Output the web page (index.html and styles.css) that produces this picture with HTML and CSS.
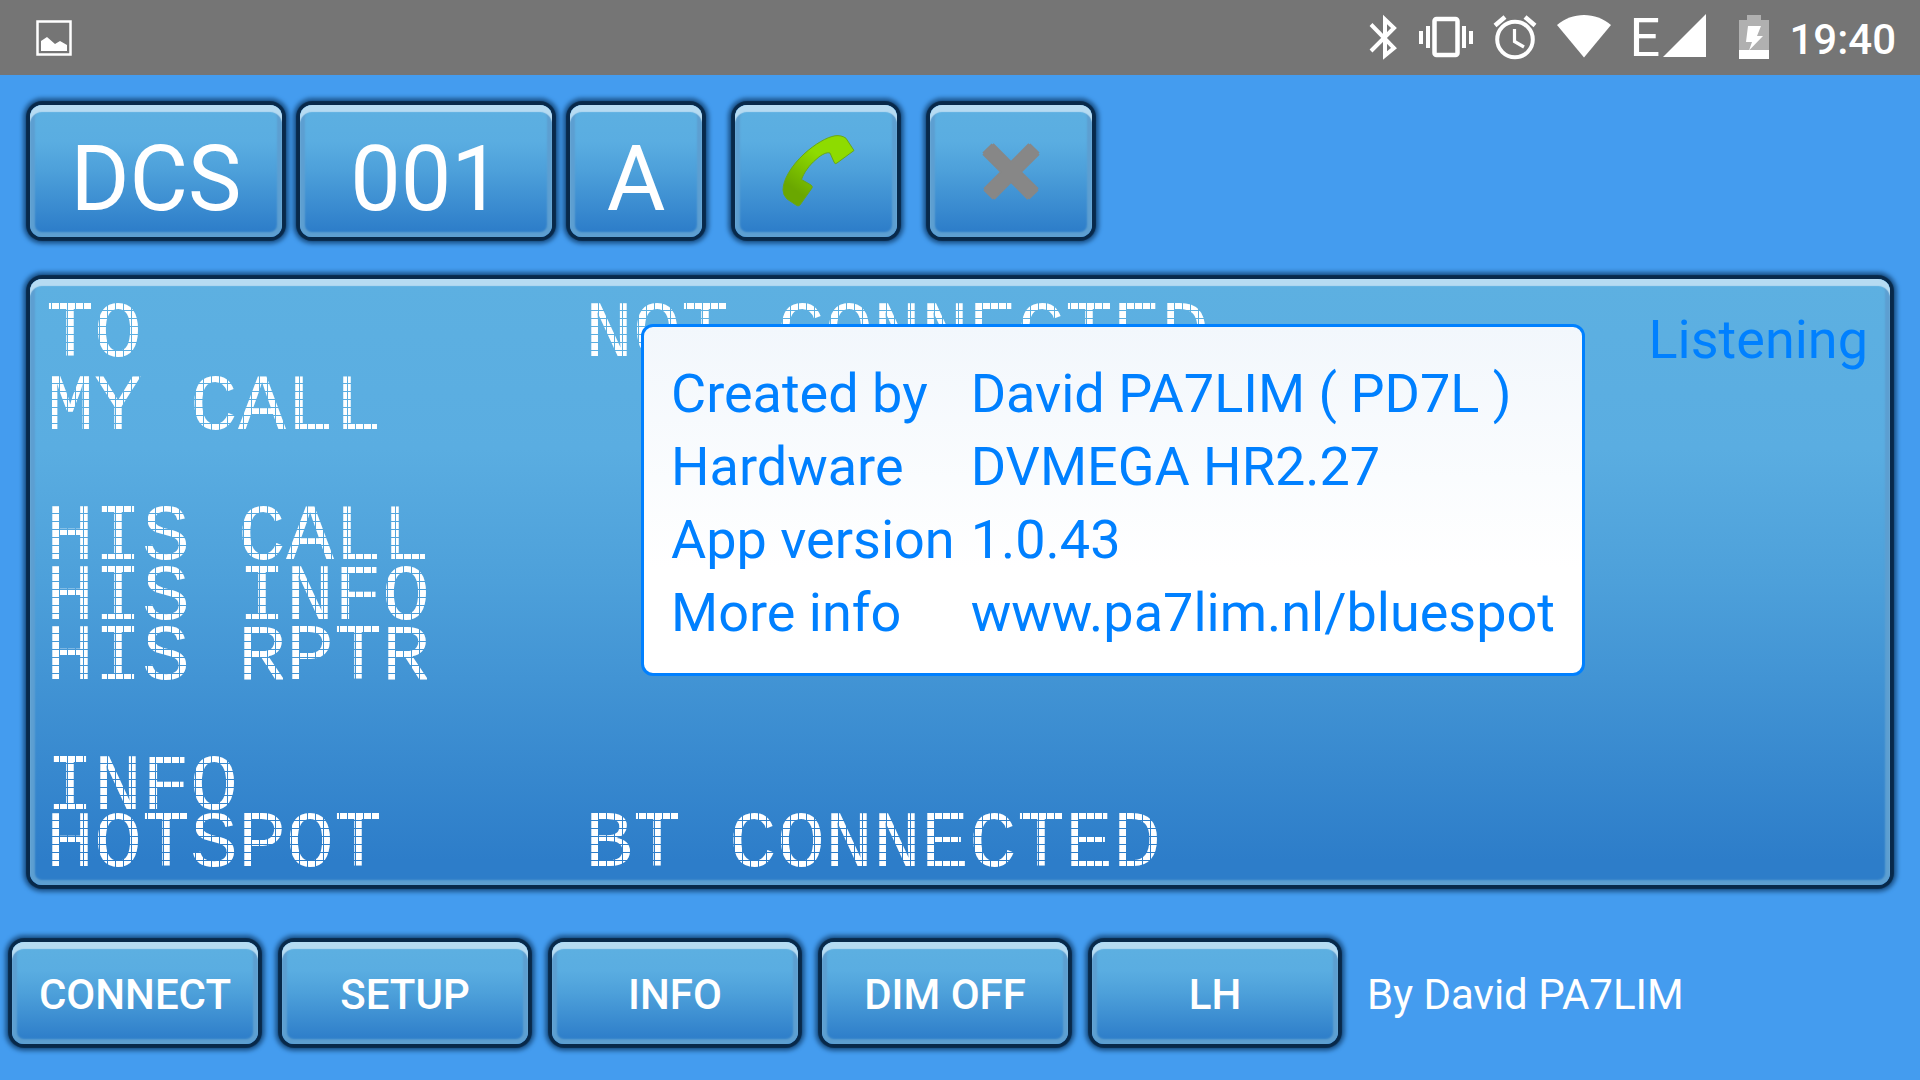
FILE: index.html
```html
<!DOCTYPE html>
<html lang="en">
<head>
<meta charset="utf-8">
<title>BlueSpot</title>
<link rel="stylesheet" href="styles.css">
</head>
<body>
<header class="status">
  <svg class="status-icon" width="36" height="47" viewBox="0 0 36 47" role="img" aria-label="Picture saved">
    <rect x="1.5" y="7.5" width="33" height="33" fill="none" stroke="#fff" stroke-width="2.5"/>
    <path d="M5 37V27l6-4 8 7 5-3 7 4v6z" fill="#fff"/>
  </svg>
  <div class="tray">
    <svg class="status-icon bluetooth" width="28" height="47" viewBox="0 0 28 47" role="img" aria-label="Bluetooth">
      <path d="M2 10.500 25 34l-9 7.500V5.500L25 14 2 37" fill="none" stroke="#fff" stroke-width="4" stroke-miterlimit="3"/>
    </svg>
    <svg class="status-icon vibrate" width="54" height="47" viewBox="0 0 54 47" role="img" aria-label="Vibrate">
      <rect x="15.500" y="5" width="23" height="36" rx="2" fill="none" stroke="#fff" stroke-width="4.500"/>
      <path d="M7 12h4v22H7zM0 17h4v13H0zM43 12h4v22h-4zM50 17h4v13h-4z" fill="#fff"/>
    </svg>
    <svg class="status-icon alarm" width="44" height="47" viewBox="0 0 44 47" role="img" aria-label="Alarm set">
      <circle cx="22" cy="25.500" r="17.800" fill="none" stroke="#fff" stroke-width="4"/>
      <path d="M2 11.500 12 3M32 3l10 8.500" stroke="#fff" stroke-width="4.500"/>
      <path d="M21.500 15v12.500l9.500 5.500" fill="none" stroke="#fff" stroke-width="3.200"/>
    </svg>
    <svg class="status-icon wifi" width="54" height="47" viewBox="0 0 54 47" role="img" aria-label="Wi-Fi">
      <path d="M0 11C15-2.500 39-2.500 54 11L27 43.500z" fill="#fff"/>
    </svg>
    <span class="network">E</span>
    <svg class="status-icon signal" width="43" height="47" viewBox="0 0 43 47" role="img" aria-label="Signal">
      <path d="M43 0v43H0z" fill="#fff"/>
    </svg>
    <svg class="status-icon battery" width="30" height="47" viewBox="0 0 30 47" role="img" aria-label="Charging">
      <path d="M8 1h14v5h8v30H0V6h8z" fill="#b0b0b0"/>
      <path d="M0 36h30v9H0zM9 12h13l-4 10h6L10 36.500 13 28H7z" fill="#fff"/>
    </svg>
    <time class="clock">19:40</time>
  </div>
</header>

<main class="app">
  <div class="dial">
    <button class="key key-wide" type="button">DCS</button>
    <button class="key key-wide" type="button">001</button>
    <button class="key key-letter" type="button">A</button>
    <button class="key key-icon" type="button" aria-label="Call">
      <svg width="78" height="72" viewBox="0 0 78 72">
        <defs>
          <linearGradient id="call" x1="0.7" y1="0.2" x2="0.2" y2="0.9">
            <stop offset="0.2" stop-color="#8edb00"/>
            <stop offset="0.9" stop-color="#6aa700"/>
          </linearGradient>
        </defs>
        <path d="M6 55C6 45 14 31 27 19 38 9 50 2 58 .8c4-.6 8 .2 11 2.500L77 15.500 60 28q-2 2-3-1l-4-9c-3-1-8 1-14 6.500-7 6-12 13-14.500 20L34 50q2 1.500 1 3L23 70q-2 2-4 0l-9-6Q6 60 6 55z" fill="url(#call)" stroke="#67a61c" stroke-width="1"/>
      </svg>
    </button>
    <button class="key key-icon" type="button" aria-label="Hang up">
      <svg width="60" height="60" viewBox="0 0 60 60">
        <path d="M7 8 52 53M53 8 8 53" stroke="#878787" stroke-width="16"/>
        <path d="M6 7 53 54M54 7 7 54" stroke="#878787" stroke-width="13"/>
      </svg>
    </button>
  </div>

  <section class="panel">
    <div class="readout">
      <div class="group group-top">
        <div class="line"><span class="dots name">TO</span><span class="dots">NOT CONNECTED</span></div>
        <div class="line"><span class="dots name">MY CALL</span></div>
      </div>
      <div class="group group-his">
        <div class="line"><span class="dots name">HIS CALL</span></div>
        <div class="line"><span class="dots name">HIS INFO</span></div>
        <div class="line"><span class="dots name">HIS RPTR</span></div>
      </div>
      <div class="group">
        <div class="line"><span class="dots name">INFO</span></div>
        <div class="line"><span class="dots name">HOTSPOT</span><span class="dots">BT CONNECTED</span></div>
      </div>
    </div>
    <p class="state">Listening</p>

    <div class="popup" role="dialog" aria-label="About">
      <table class="about">
        <tr><th scope="row">Created by</th><td>David PA7LIM ( PD7L )</td></tr>
        <tr><th scope="row">Hardware</th><td>DVMEGA HR2.27</td></tr>
        <tr><th scope="row">App version</th><td>1.0.43</td></tr>
        <tr><th scope="row">More info</th><td><a href="http://www.pa7lim.nl/bluespot">www.pa7lim.nl/bluespot</a></td></tr>
      </table>
    </div>
  </section>

  <footer class="actions">
    <button class="key action" type="button">CONNECT</button>
    <button class="key action" type="button">SETUP</button>
    <button class="key action" type="button">INFO</button>
    <button class="key action" type="button">DIM OFF</button>
    <button class="key action" type="button">LH</button>
    <p class="credit">By David PA7LIM</p>
  </footer>
</main>
</body>
</html>
```

FILE: styles.css
```css
* {
  box-sizing: border-box;
}

body {
  display: flex;
  flex-direction: column;
  min-height: 100vh;
  margin: 0;
  background: #449cef;
  color: #fff;
  font-family: Roboto, sans-serif;
}

p {
  margin: 0;
}

/* Status bar */
.status {
  display: flex;
  align-items: center;
  justify-content: space-between;
  height: 75px;
  padding: 0 24px 0 36px;
  background: #757575;
}

.tray {
  display: flex;
  align-items: center;
}

.status-icon {
  display: block;
  flex: none;
}

.vibrate {
  margin-left: 22px;
}

.alarm {
  margin-left: 20px;
}

.wifi {
  margin-left: 20px;
}

.network {
  width: 34px;
  margin-left: 18px;
  font-size: 54px;
  line-height: 75px;
}

.battery {
  margin-left: 33px;
}

.clock {
  margin-left: 20px;
  padding-top: 4px;
  font-size: 42px;
  font-weight: 500;
  line-height: 48px;
}

/* Main screen */
.app {
  display: flex;
  flex: 1;
  flex-direction: column;
  padding: 30px 30px 36px;
}

.dial {
  display: flex;
  gap: 18px;
}

/* Bevelled surface shared by the keys and the panel */
.key,
.panel {
  border: 0;
  border-radius: 12px;
  background: linear-gradient(#5db0e1 0%, #5aade1 28%, #4da0da 50%, #2d7dc9 96%);
  box-shadow:
    inset 0 7px 1px #b6dbf2,
    inset 0 0 2px 5px #5d9fd1,
    0 0 1px 4px #08294a,
    0 0 4px 7px #1d5790;
}

.key {
  display: flex;
  flex: none;
  align-items: center;
  justify-content: center;
  height: 132px;
  padding: 18px 0 0;
  color: #fff;
  font-family: inherit;
  font-size: 90px;
  line-height: 106px;
}

.key-wide {
  width: 252px;
}

.key-letter {
  width: 132px;
}

.key-icon {
  width: 162px;
  margin-left: 15px;
  padding: 0;
}

/* Readout panel */
.panel {
  position: relative;
  display: flex;
  flex: 1;
  justify-content: space-between;
  align-items: flex-start;
  margin: 42px 0 57px;
  padding: 16px 22px 16px 16px;
}

.readout {
  display: flex;
  flex-direction: column;
  gap: 73px;
  padding-top: 6px;
}

.group {
  display: flex;
  flex-direction: column;
}

.group-top {
  gap: 16px;
}

.group-his {
  gap: 3px;
}

.line {
  display: flex;
  height: 57px;
}

/* The mask cuts the letters into LCD dots, six to a character cell */
.dots {
  font-family: "Liberation Mono", monospace;
  font-size: 80px;
  line-height: 67px;
  white-space: pre;
  mask-image: repeating-linear-gradient(90deg, #000 0 7px, transparent 7px 8px), repeating-linear-gradient(#000 0 7px, transparent 7px 8px);
  mask-size: 8px 8px;
  mask-position: 6px 2px;
  mask-composite: intersect;
}

.name {
  width: 539px;
}

.state {
  padding-top: 13px;
  color: #0080ff;
  font-size: 54px;
  line-height: 64px;
}

/* About popup, floats over the readout */
.popup {
  position: absolute;
  top: 45px;
  left: 611px;
  padding: 30px 27px 24px;
  border: 3px solid #0080ff;
  border-radius: 12px;
  background: linear-gradient(#f2f7fc, #fff 70%);
  color: #0080ff;
}

.about {
  border-collapse: collapse;
  font-size: 54px;
  line-height: 73px;
  white-space: nowrap;
}

.about th,
.about td {
  padding: 0;
  font-weight: 400;
  text-align: left;
}

.about th {
  padding-right: 16px;
}

.about a {
  color: inherit;
  text-decoration: none;
}

/* Bottom actions */
.actions {
  display: flex;
  align-items: center;
  gap: 24px;
  margin-left: -18px;
}

.action {
  width: 246px;
  height: 102px;
  padding: 3px 0 0;
  font-size: 42px;
  font-weight: 500;
  line-height: 48px;
}

.credit {
  padding: 3px 0 0 5px;
  font-size: 42px;
  line-height: 48px;
}
```
